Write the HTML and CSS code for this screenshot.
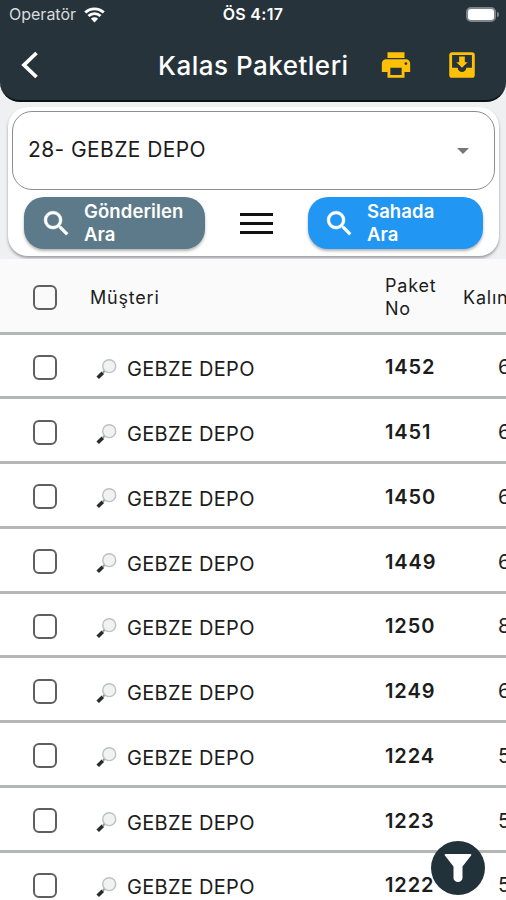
FILE: index.html
```html
<!DOCTYPE html>
<html lang="tr">

<head>
  <meta charset="UTF-8">
  <meta name="viewport" content="width=device-width, initial-scale=1.0">
  <title>Kalas Paketleri</title>
  <link rel="stylesheet" href="styles.css">
</head>

<body>
  <svg class="symbols">
    <symbol id="search" viewBox="0 0 24 24">
      <path d="M15.5 14h-.79l-.28-.27A6.47 6.47 0 0 0 16 9.5 6.5 6.5 0 1 0 9.5 16c1.61 0 3.09-.59 4.23-1.57l.27.28v.79l5 4.99L20.49 19l-4.99-5zm-6 0C7.01 14 5 11.99 5 9.5S7.01 5 9.5 5 14 7.01 14 9.5 11.99 14 9.5 14z" />
    </symbol>
    <symbol id="lens" viewBox="0 0 22 22">
      <path d="M2.6 19 7.500 14" stroke="#2b2b2b" stroke-width="3.4" />
      <path d="M7.500 14l2-2" stroke="#999" stroke-width="2" />
      <circle cx="13.6" cy="7.8" r="6.2" fill="#f1f2f2" stroke="#bfc2c2" stroke-width="1.4" />
    </symbol>
  </svg>

  <header class="appbar">
    <div class="status">
      <div class="carrier">
        <span>Operatör</span>
        <svg class="wifi" viewBox="0 0 20 16">
          <path d="M1.2 6.2a12.6 12.6 0 0 1 17.6 0M4.3 9.5a8.2 8.2 0 0 1 11.4 0" fill="none" stroke="#fff" stroke-width="2.7" />
          <path d="M10 15.6 6.6 12a4.8 4.8 0 0 1 6.8 0z" fill="#fff" />
        </svg>
      </div>
      <div class="clock">ÖS 4:17</div>
      <div class="power"><i class="battery"></i><i class="tip"></i></div>
    </div>
    <div class="toolbar">
      <svg class="back" viewBox="0 0 18 28">
        <path d="M15.500 2 3 14 15.500 26" fill="none" stroke="#fff" stroke-width="3.8" />
      </svg>
      <h1>Kalas Paketleri</h1>
      <svg class="action" viewBox="0 0 24 24">
        <path d="M19 8H5c-1.660 0-3 1.340-3 3v6h4v4h12v-4h4v-6c0-1.660-1.340-3-3-3zm-3 11H8v-5h8v5zm3-7c-.55 0-1-.45-1-1s.45-1 1-1 1 .45 1 1-.45 1-1 1zm-1-9H6v4h12V3z" />
      </svg>
      <svg class="action" viewBox="0 0 24 24">
        <path fill-rule="evenodd" d="M5 3h14a2 2 0 0 1 2 2v14a2 2 0 0 1-2 2H5a2 2 0 0 1-2-2V5c0-1.100.9-2 2-2zM5 5v9h4a3 3 0 0 0 6 0h4V5zM16 10h-2V6h-4v4H8l4 4z" />
      </svg>
    </div>
  </header>

  <main>
    <section class="panel">
      <div class="select">
        <span>28- GEBZE DEPO</span>
        <i class="arrow"></i>
      </div>
      <div class="buttons">
        <button class="btn sent"><svg><use href="#search" /></svg><span>Gönderilen<br>Ara</span></button>
        <div class="menu"><i></i><i></i><i></i></div>
        <button class="btn field"><svg><use href="#search" /></svg><span>Sahada<br>Ara</span></button>
      </div>
    </section>

    <section class="table">
      <div class="row head"><i class="check"></i><span>Müşteri</span><span class="no">Paket<br>No</span><span class="size">Kalınlık</span></div>
      <div class="row"><i class="check"></i><span class="customer"><svg><use href="#lens" /></svg>GEBZE DEPO</span><b class="no">1452</b><span class="size">60</span></div>
      <div class="row"><i class="check"></i><span class="customer"><svg><use href="#lens" /></svg>GEBZE DEPO</span><b class="no">1451</b><span class="size">60</span></div>
      <div class="row"><i class="check"></i><span class="customer"><svg><use href="#lens" /></svg>GEBZE DEPO</span><b class="no">1450</b><span class="size">60</span></div>
      <div class="row"><i class="check"></i><span class="customer"><svg><use href="#lens" /></svg>GEBZE DEPO</span><b class="no">1449</b><span class="size">60</span></div>
      <div class="row"><i class="check"></i><span class="customer"><svg><use href="#lens" /></svg>GEBZE DEPO</span><b class="no">1250</b><span class="size">80</span></div>
      <div class="row"><i class="check"></i><span class="customer"><svg><use href="#lens" /></svg>GEBZE DEPO</span><b class="no">1249</b><span class="size">60</span></div>
      <div class="row"><i class="check"></i><span class="customer"><svg><use href="#lens" /></svg>GEBZE DEPO</span><b class="no">1224</b><span class="size">50</span></div>
      <div class="row"><i class="check"></i><span class="customer"><svg><use href="#lens" /></svg>GEBZE DEPO</span><b class="no">1223</b><span class="size">50</span></div>
      <div class="row"><i class="check"></i><span class="customer"><svg><use href="#lens" /></svg>GEBZE DEPO</span><b class="no">1222</b><span class="size">50</span></div>
    </section>
  </main>

  <button class="filter">
    <svg viewBox="0 0 28 29">
      <path d="M1.500 1h25c1 0 1 1 .6 1.500L18.500 13.500V25a4.500 4 0 0 1-9 0V13.500L.9 2.500C.5 2 .5 1 1.500 1z" />
    </svg>
  </button>
</body>

</html>
```

FILE: styles.css
```css
* {
  box-sizing: border-box;
}

body {
  margin: 0;
  height: 900px;
  overflow: hidden;
  position: relative;
  background: #eff0f2;
  color: #1c1c1c;
  font-family: Inter, sans-serif;
}

.symbols {
  display: none;
}

.appbar {
  height: 102px;
  background: #26333a;
  border-bottom: 2px solid #0c1317;
  border-radius: 0 0 20px 20px;
  color: #fff;
}

.status {
  display: grid;
  grid-template-columns: 1fr 1fr 1fr;
  align-items: center;
  height: 28px;
  padding: 0 7px 0 9px;
  font-size: 16px;
}

.carrier {
  display: flex;
  align-items: center;
  gap: 8px;
  color: #d9dcde;
}

.wifi {
  width: 21px;
  height: 17px;
}

.clock {
  text-align: center;
  font-weight: 600;
  letter-spacing: 0.3px;
  padding-right: 2px;
}

.power {
  display: flex;
  align-items: center;
  justify-content: flex-end;
  gap: 1px;
}

.battery {
  width: 30px;
  height: 15px;
  background: #fff;
  border: 2px solid #7c858a;
  border-radius: 5px;
}

.tip {
  width: 2px;
  height: 5px;
  background: #7c858a;
  border-radius: 0 2px 2px 0;
}

.toolbar {
  display: flex;
  align-items: center;
  height: 74px;
}

.back {
  flex: none;
  width: 18px;
  height: 28px;
  margin-left: 21px;
}

h1 {
  flex: none;
  width: 192px;
  margin: 0 29px 0 119px;
  font-size: 26px;
  font-weight: 500;
  letter-spacing: 0.5px;
  white-space: nowrap;
}

.action {
  flex: none;
  width: 34px;
  height: 34px;
  margin-right: 32px;
  fill: #ffc107;
}

.panel {
  width: 491px;
  height: 149px;
  margin: 5px 0 0 8px;
  padding: 4px;
  background: #fff;
  border-radius: 20px;
  box-shadow: 0 2px 3px rgba(0, 0, 0, 0.35);
}

.select {
  display: flex;
  align-items: center;
  justify-content: space-between;
  height: 79px;
  padding: 0 25px 2px 15px;
  border: 1px solid #8d8d8d;
  border-radius: 20px;
  font-size: 21px;
  letter-spacing: 0.4px;
}

.arrow {
  margin-top: 3px;
  border: 6.5px solid transparent;
  border-top-color: #777;
  border-bottom: 0;
}

.buttons {
  display: flex;
  align-items: center;
  justify-content: space-between;
  padding: 7px 12px 0;
}

.btn {
  display: flex;
  align-items: center;
  gap: 11px;
  width: 181px;
  height: 52px;
  padding: 0 16px;
  border: 0;
  border-radius: 20px;
  color: #fff;
  font: 600 18.500px/23px Inter, sans-serif;
  letter-spacing: 0.1px;
  text-align: left;
  box-shadow: 0 2px 3px rgba(0, 0, 0, 0.3);
}

.btn svg {
  flex: none;
  width: 33px;
  height: 33px;
  fill: #fff;
  stroke: #fff;
  stroke-width: 0.4px;
}

.sent {
  background: #5c7a89;
}

.field {
  width: 175px;
  padding-left: 15px;
  background: #2196f3;
}

.menu {
  display: flex;
  flex-direction: column;
  gap: 6px;
  width: 33px;
}

.menu i {
  height: 3px;
  background: #111;
}

.table {
  margin-top: 3px;
  overflow: hidden;
}

.row {
  display: grid;
  grid-template-columns: 57px 295px 78px 43px;
  align-items: center;
  height: 64.750px;
  padding: 4px 0 0 33px;
  background: #fff;
  border-bottom: 3px solid #b5b6b6;
  font-size: 20px;
}

.head {
  height: 75.500px;
  padding-top: 4px;
  background: #fafafa;
  font-size: 18px;
  line-height: 23px;
  letter-spacing: 0.8px;
}

.check {
  width: 24px;
  height: 25px;
  border: 2px solid #5f5f5f;
  border-radius: 6px;
}

.customer {
  display: flex;
  align-items: center;
  gap: 9px;
  padding: 4px 0 0 5px;
  letter-spacing: 0.3px;
}

.customer svg {
  width: 23px;
  height: 23px;
}

b {
  font-weight: 600;
  letter-spacing: 0.9px;
}

.row:not(.head) .size {
  padding-left: 35px;
}

.filter {
  position: absolute;
  left: 431px;
  top: 841px;
  width: 54px;
  height: 54px;
  padding: 1px 0 0;
  border: 0;
  border-radius: 50%;
  background: #22323a;
}

.filter svg {
  width: 28px;
  height: 29px;
  fill: #fff;
}
```
